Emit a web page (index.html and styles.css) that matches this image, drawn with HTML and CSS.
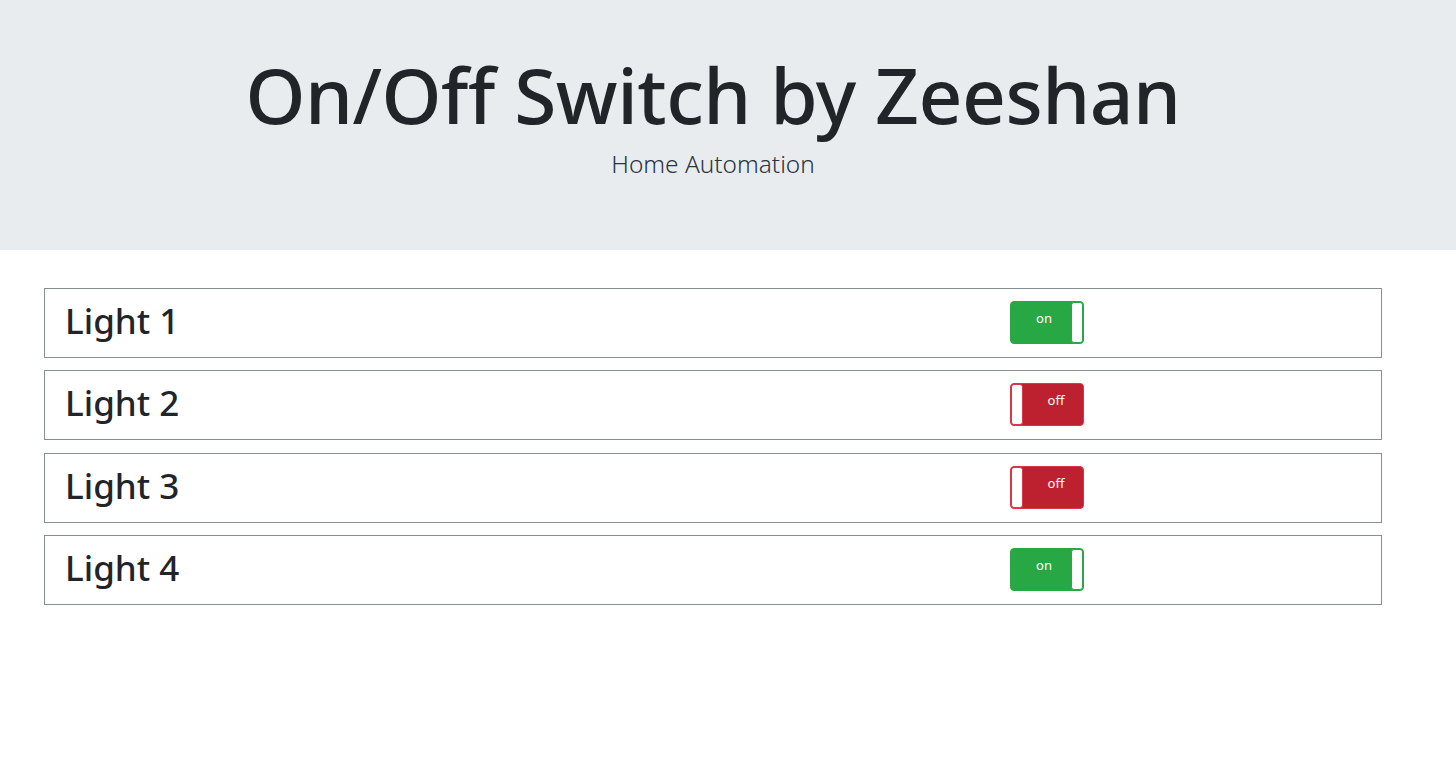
FILE: index.html
```html
<!DOCTYPE html>
<html>
<head>
<meta charset="utf-8">
<link rel="stylesheet" href="styles.css">
</head>
<body>
<header class="jumbo">
  <h1 class="title">On/Off Switch by Zeeshan</h1>
  <p class="lead">Home Automation</p>
</header>
<main class="list">
  <div class="row">
    <h2 class="label">Light 1</h2>
    <div class="toggle on"><span class="txt">on</span><span class="handle"></span></div>
  </div>
  <div class="row">
    <h2 class="label">Light 2</h2>
    <div class="toggle off"><span class="handle"></span><span class="txt">off</span></div>
  </div>
  <div class="row">
    <h2 class="label">Light 3</h2>
    <div class="toggle off"><span class="handle"></span><span class="txt">off</span></div>
  </div>
  <div class="row">
    <h2 class="label">Light 4</h2>
    <div class="toggle on"><span class="txt">on</span><span class="handle"></span></div>
  </div>
</main>
</body>
</html>
```
FILE: styles.css
```css
* { box-sizing: border-box; }
body {
  margin: 0;
  font-family: "Noto Sans", "Open Sans", sans-serif;
  color: #212529;
  background: #fff;
}
.jumbo {
  background: #e9ecef;
  height: 250px;
  padding: 47px 30px 0 0;
  text-align: center;
}
.title {
  margin: 0;
  font-size: 76.6px;
  font-weight: 500;
  line-height: 94px;
  letter-spacing: -0.5px;
}
.lead {
  margin: 7px 0 0;
  font-size: 24.4px;
  font-weight: 300;
  line-height: 32px;
  color: #2b3440;
}
.list {
  padding: 38px 74px 0 44px;
  display: flex;
  flex-direction: column;
  gap: 12.3px;
}
.row {
  height: 70px;
  border: 1px solid #868e96;
  display: flex;
  align-items: center;
  padding-left: 20px;
}
.label {
  margin: 0 0 4px;
  width: 945px;
  font-size: 35px;
  font-weight: 500;
  line-height: 44px;
}
.toggle {
  width: 74px;
  height: 43px;
  margin-top: -1px;
  border-radius: 4px;
  display: flex;
  overflow: hidden;
  color: #fff;
  font-size: 13px;
  line-height: 16px;
  font-family: "Noto Sans", sans-serif;
}
.toggle .txt {
  flex: 1;
  text-align: center;
  padding: 8px 0 0 6px;
}
.toggle .handle {
  width: 12px;
  background: #fff;
  border-radius: 3px;
}
.toggle.on {
  background: #28a745;
  border: 1px solid #28a745;
}
.toggle.on .handle {
  border: 1px solid #28a745;
}
.toggle.off {
  background: #bd2130;
  border: 1px solid #dc3545;
}
.toggle.off .handle {
  border: 1px solid #dc3545;
}
```
